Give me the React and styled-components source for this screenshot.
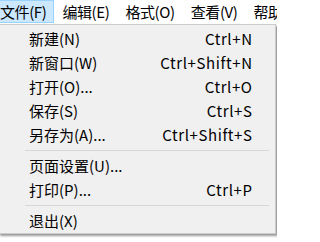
import React from "react";
import styled, { createGlobalStyle } from "styled-components";

const Global = createGlobalStyle`
  html, body { margin: 0; padding: 0; background: #ffffff; overflow: hidden; }
  body { font-family: "Noto Sans CJK SC", "Noto Sans", sans-serif; font-size: 15px; color: #000; }
`;

const Window = styled.div`
  width: 277px;
  height: 242px;
  overflow: hidden;
  background: #ffffff;
`;

const MenuBar = styled.div`
  display: flex;
  height: 24px;
  margin-left: -8px;
  overflow: hidden;
  background: #ffffff;
`;

const BarItem = styled.div`
  display: flex;
  flex: none;
  align-items: center;
  padding: 0 7px 1px 7px;
  height: 23px;
  box-sizing: border-box;
  white-space: nowrap;
  letter-spacing: -0.4px;
  background: ${(p) => (p.$active ? "#cce8ff" : "transparent")};
  border: 1px solid ${(p) => (p.$active ? "#99d1ff" : "transparent")};
`;

const Popup = styled.div`
  margin-left: -2px;
  width: 278px;
  box-sizing: border-box;
  background: #f0f0f0;
  border: 1px solid #cccccc;
  box-shadow: 2px 2px 2px rgba(0, 0, 0, 0.4);
  padding: 2px 0 0 0;
`;

const Item = styled.div`
  display: flex;
  justify-content: space-between;
  align-items: center;
  height: 24px;
  padding: 0 23px 1px 30px;
  box-sizing: border-box;
  white-space: nowrap;
`;

const Shortcut = styled.span`
  text-align: right;
  letter-spacing: 0.6px;
  margin-right: -0.6px;
`;

const Separator = styled.div`
  height: 1px;
  background: #d7d7d7;
  margin: 3px 6px 3px 26px;
`;

const items = [
  ["新建(N)", "Ctrl+N"],
  ["新窗口(W)", "Ctrl+Shift+N"],
  ["打开(O)...", "Ctrl+O"],
  ["保存(S)", "Ctrl+S"],
  ["另存为(A)...", "Ctrl+Shift+S"],
  "-",
  ["页面设置(U)...", ""],
  ["打印(P)...", "Ctrl+P"],
  "-",
  ["退出(X)", ""],
];

export default function App() {
  return (
    <Window>
      <Global />
      <MenuBar>
        <BarItem $active>文件(F)</BarItem>
        <BarItem>编辑(E)</BarItem>
        <BarItem>格式(O)</BarItem>
        <BarItem>查看(V)</BarItem>
        <BarItem>帮助(H)</BarItem>
      </MenuBar>
      <Popup>
        {items.map((it, i) =>
          it === "-" ? (
            <Separator key={i} />
          ) : (
            <Item key={i}>
              <span>{it[0]}</span>
              <Shortcut>{it[1]}</Shortcut>
            </Item>
          )
        )}
      </Popup>
    </Window>
  );
}
